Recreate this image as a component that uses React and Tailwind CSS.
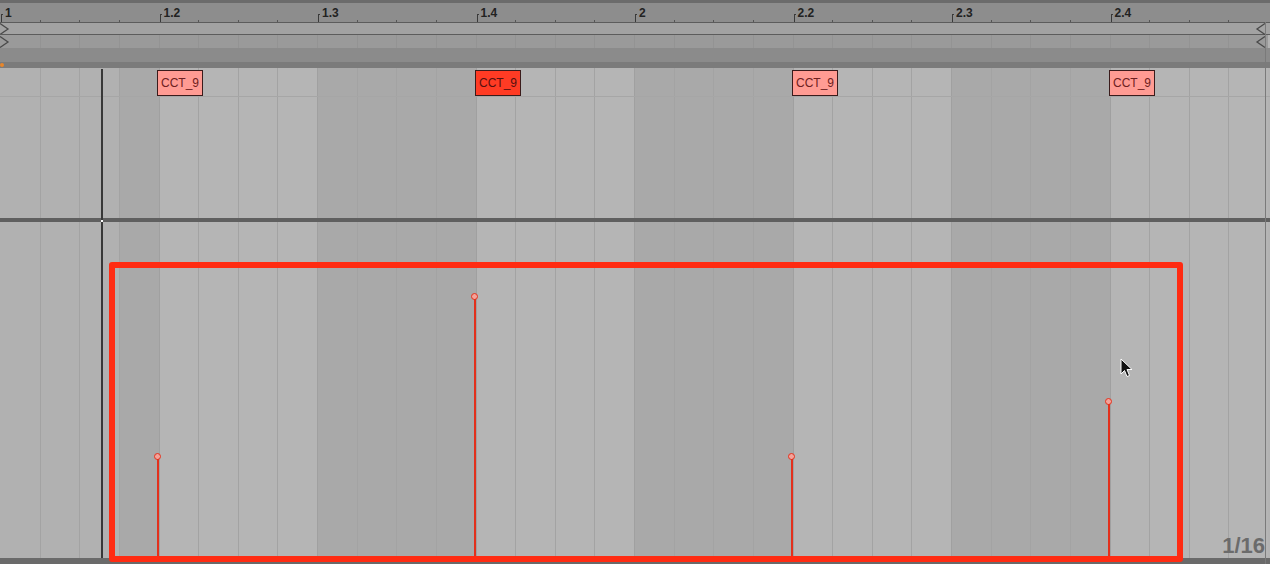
import React from "react";

const BEAT = 158.5;
const SUB = BEAT / 4;
const labels = ["1", "1.2", "1.3", "1.4", "2", "2.2", "2.3", "2.4"];

// shade of every 16th column, light / dark per beat, first three before clip start
const shades = Array.from({ length: 32 }, (_, i) => {
  const beat = Math.floor(i / 4);
  if (beat === 0) return i < 3 ? "bg-[#b1b1b1]" : "bg-[#a9a9a9]";
  return beat % 2 === 0 ? "bg-[#a9a9a9]" : "bg-[#b5b5b5]";
});

const notes = [
  { x: 158, top: 457 },
  { x: 475, top: 297 },
  { x: 792, top: 457 },
  { x: 1109, top: 402 },
];

const clips = [
  { x: 157, active: false },
  { x: 475, active: true },
  { x: 792, active: false },
  { x: 1109, active: false },
];

const Lane = ({ className = "", flat }) => (
  <div className={`flex ${className}`}>
    {shades.map((s, i) => (
      <div
        key={i}
        className={`${flat ? "bg-[#9a9a9a]" : s} shrink-0 h-full border-l ${flat ? "border-[#939393]" : i % 4 === 0 ? "border-[#a0a0a0]" : "border-[#a3a3a3]"} ${i === 0 ? "border-l-0" : ""}`}
        style={{ width: SUB }}
      />
    ))}
  </div>
);

const Ruler = () => (
  <div className="relative h-[19px] bg-[#8d8d8d] shrink-0">
    {labels.map((l, i) => (
      <div key={l} className="absolute top-0 h-full" style={{ left: i * BEAT + 1 }}>
        <div className="absolute left-0 bottom-0 h-[8px] w-px bg-[#3a3a3a]" />
        <div className="absolute left-0 top-[11px] w-[2px] h-px bg-[#3a3a3a]" />
        <span className="absolute left-[4px] top-[4px] text-[12px] leading-none text-[#222] font-semibold">
          {l}
        </span>
      </div>
    ))}
    {Array.from({ length: 32 }, (_, i) =>
      i % 4 === 0 ? null : (
        <div key={i} className="absolute bottom-0 w-px h-[2px] bg-[#555]" style={{ left: i * SUB }} />
      )
    )}
  </div>
);

const Chevron = ({ flip }) => (
  <svg width="10" height="12" viewBox="0 0 10 12" className={flip ? "scale-x-[-1]" : ""}>
    <path d="M0 0.5 L8 6 L0 11.5" fill="none" stroke="#4a4a4a" strokeWidth="1.3" />
  </svg>
);

export default function App() {
  return (
    <div className="relative w-[1270px] h-[564px] overflow-hidden bg-[#b3b3b3] font-['Liberation_Sans',Arial,sans-serif]">
      <div className="flex flex-col h-full">
        <div className="h-[3px] bg-[#6b6b6b] shrink-0" />
        <Ruler />
        <div className="h-px bg-[#5c5c5c] shrink-0" />
        <div className="h-[11px] bg-[#a2a2a2] shrink-0 flex justify-between items-center pr-[5px]">
          <Chevron />
          <Chevron flip />
        </div>
        <div className="h-px bg-[#5c5c5c] shrink-0" />
        <div className="relative h-[13px] shrink-0">
          <Lane className="h-full" flat />
          <div className="absolute inset-0 flex justify-between items-center pr-[5px]">
            <Chevron />
            <Chevron flip />
          </div>
        </div>
        <div className="h-[14px] bg-[#8b8b8b] shrink-0" />
        <div className="h-[6px] bg-[#7b7b7b] shrink-0" />

        <div className="relative h-[150px] shrink-0">
          <Lane className="h-full" />
          <div className="absolute left-0 right-0 top-[28px] h-px bg-[#a6a6a6]" />
        </div>
        <div className="h-[4px] bg-[#5f5f5f] shrink-0" />
        <Lane className="flex-1" />
        <div className="h-[6px] bg-[#6a6a6a] shrink-0" />
      </div>

      {/* right edge */}
      <div className="absolute top-[22px] bottom-0 left-[1265px] w-px bg-[#7a7a7a]" />
      {/* loop start marker */}
      <div className="absolute left-0 top-[63px] w-[4px] h-[4px] rounded-full bg-[#e8862a]" />

      {/* clip labels */}
      {clips.map((c) => (
        <div
          key={c.x}
          className={`absolute top-[70px] h-[26px] w-[46px] border border-[#3a1b1b] flex items-center justify-center text-[12px] leading-none ${
            c.active ? "bg-[#ff3b24] text-[#561010]" : "bg-[#ff9b93] text-[#6e2020]"
          }`}
          style={{ left: c.x }}
        >
          CCT_9
        </div>
      ))}

      {/* playhead / insert marker */}
      <div className="absolute left-[101px] top-[69px] bottom-[6px] w-[1.5px] bg-[#383838]" />
      <div className="absolute left-[101px] top-[220px] w-[2px] h-[2px] bg-white" />

      {/* velocity stems */}
      {notes.map((n) => (
        <div key={n.x} className="absolute" style={{ left: n.x - 4, top: n.top - 4 }}>
          <div className="w-[7px] h-[7px] rounded-full border-[1.5px] border-[#e3301c] bg-[#f3a39a]" />
          <div
            className="absolute left-[2.5px] top-[6px] w-[2px] bg-[#e3301c]"
            style={{ height: 558 - n.top - 2 }}
          />
        </div>
      ))}

      {/* highlight box */}
      <div className="absolute left-[109px] top-[262px] w-[1074px] h-[300px] border-[6px] border-[#ff2b12] rounded-[3px]" />

      {/* mouse cursor */}
      <svg className="absolute left-[1120px] top-[358px]" width="14" height="22" viewBox="0 0 14 22">
        <path
          d="M1 1 L1 16 L4.5 12.5 L7 18.5 L9.5 17.5 L7 11.5 L12 11.5 Z"
          fill="#111"
          stroke="#fff"
          strokeWidth="1"
          strokeLinejoin="round"
        />
      </svg>

      <div className="absolute right-[5px] bottom-[7px] text-[22px] leading-none font-bold text-[#6b6b6b]">
        1/16
      </div>
    </div>
  );
}
